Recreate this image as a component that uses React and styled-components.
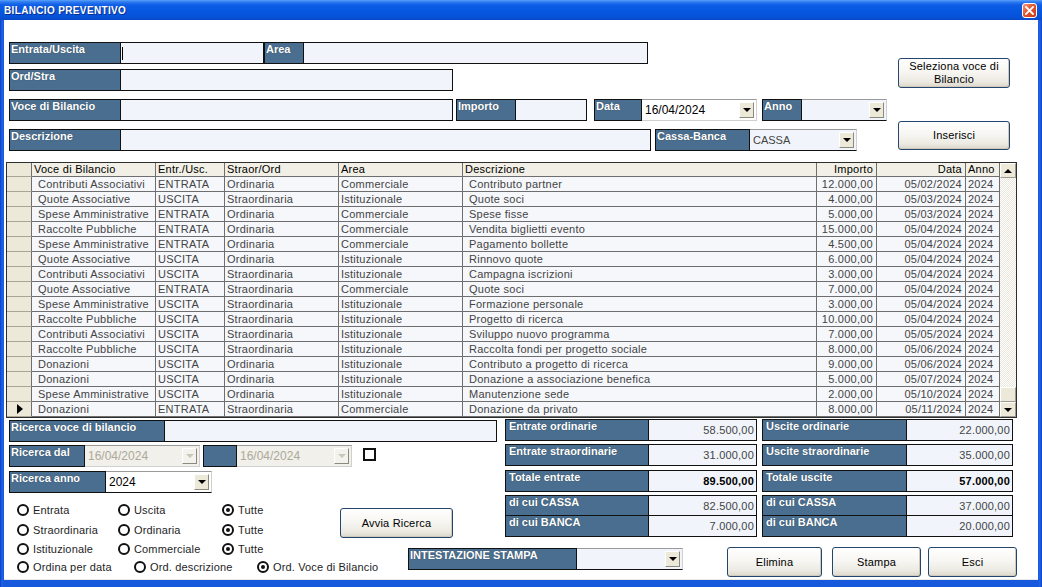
import React from 'react';
import styled, { createGlobalStyle } from 'styled-components';

const LABEL = '#4A6E8F';
const INPUT = '#F1F4FA';
const LINE = '#111';

const GlobalStyle = createGlobalStyle`
  html, body { margin: 0; padding: 0; background: #fff; }
  body { font-family: "Liberation Sans", Arial, sans-serif; }
  * { box-sizing: border-box; }
`;

const Window = styled.div`
  width: 1042px;
  height: 587px;
  display: flex;
  flex-direction: column;
  background: linear-gradient(90deg, #0A3FC4 0px, #1F63E6 2px, #1659DD 4px, #1659DD 1038px, #1F63E6 1040px, #0A3FC4 1042px);
  overflow: hidden;
`;

const TitleBar = styled.div`
  height: 20px;
  flex: none;
  display: flex;
  align-items: center;
  justify-content: space-between;
  padding: 0 5px 0 4px;
  background: linear-gradient(180deg, #5AA2FB 0%, #2E7AF0 10%, #0F5DE6 25%, #0657E0 55%, #0552D8 85%, #0A49C6 100%);
`;

const Title = styled.span`
  color: #fff;
  font-weight: bold;
  font-size: 10px;
  letter-spacing: 0.35px;
  text-shadow: 1px 1px 0 #0A2E8C;
`;

const CloseBtn = styled.div`
  width: 15px;
  height: 15px;
  border: 1px solid #fff;
  border-radius: 3px;
  background: linear-gradient(135deg, #F59C7E 0%, #E2552F 45%, #C83A14 100%);
  display: flex;
  align-items: center;
  justify-content: center;
`;

const Client = styled.div`
  flex: 1;
  margin: 0 4px 8px 4px;
  background: #fff;
  display: flex;
  flex-direction: column;
  padding: 22px 0 0 2px;
  border-bottom: 1px solid #E8E8E8;
`;

/* ---------- top form ---------- */

const TopSection = styled.div`
  display: flex;
  align-items: flex-start;
  margin-left: 3px;
`;

const Form = styled.div`
  display: flex;
  flex-direction: column;
  width: 878px;
`;

const FormRow = styled.div`
  display: flex;
  align-items: flex-start;
  margin-top: ${p => p.$mt || 0}px;
`;

const Field = styled.div`
  display: flex;
  width: ${p => p.$w}px;
  height: 22px;
  border: 1px solid ${LINE};
  margin-left: ${p => p.$ml || 0}px;
  flex: none;
`;

const FieldLabel = styled.div`
  width: ${p => p.$w}px;
  flex: none;
  background: ${LABEL};
  border-right: 1px solid ${LINE};
  color: #fff;
  font-weight: bold;
  font-size: 11px;
  line-height: 13px;
  padding-left: ${p => p.$pl ?? 1}px;
  white-space: nowrap;
  overflow: hidden;
  text-shadow: 0 0 1px rgba(0, 0, 0, 0.45);
`;

const FieldInput = styled.div`
  flex: 1;
  background: ${INPUT};
  display: flex;
  align-items: center;
  padding-left: 1px;
`;

const Caret = styled.span`
  width: 1px;
  height: 13px;
  background: #000;
`;

const LabelBox = styled.div`
  width: ${p => p.$w}px;
  height: 22px;
  flex: none;
  margin-left: ${p => p.$ml || 0}px;
  border: 1px solid ${LINE};
  background: ${LABEL};
  color: #fff;
  font-weight: bold;
  font-size: 11px;
  line-height: 13px;
  padding-left: 1px;
  white-space: nowrap;
  overflow: hidden;
  text-shadow: 0 0 1px rgba(0, 0, 0, 0.45);
`;

const Combo = styled.div`
  width: ${p => p.$w}px;
  height: 22px;
  flex: none;
  display: flex;
  align-items: center;
  background: ${p => p.$bg || '#fff'};
  border-top: 1px solid #9A9A9A;
  border-bottom: 1px solid ${p => p.$bottom || LINE};
  border-right: 1px solid #D0D0D0;
  padding-left: 3px;
`;

const ComboText = styled.span`
  flex: 1;
  font-size: ${p => p.$fs || 12}px;
  color: ${p => p.$color || '#000'};
  white-space: nowrap;
  overflow: hidden;
`;

const DropBtn = styled.div`
  width: 15px;
  height: 16px;
  margin-right: 2px;
  flex: none;
  background: ${p => (p.$disabled ? '#F3F2EC' : '#ECE9D8')};
  border: 1px solid;
  border-color: #fff #8C8A7C #8C8A7C #fff;
  display: flex;
  align-items: center;
  justify-content: center;
  &::after {
    content: '';
    border-left: 4px solid transparent;
    border-right: 4px solid transparent;
    border-top: 4px solid ${p => (p.$disabled ? '#C9C7BA' : '#000')};
  }
`;

const ButtonCol = styled.div`
  display: flex;
  flex-direction: column;
  margin-left: 11px;
  padding-top: 16px;
  gap: 33px;
`;

const XPButton = styled.button`
  width: ${p => p.$w}px;
  height: ${p => p.$h || 30}px;
  margin: ${p => p.$m || '0'};
  flex: none;
  padding: 0;
  border: 1px solid #24466E;
  border-radius: 3px;
  background: linear-gradient(180deg, #FFFFFF 0%, #F7F6F2 45%, #ECEAE2 80%, #DCD7CA 100%);
  box-shadow: inset -1px -1px 0 #CFCABB;
  font-family: "Liberation Sans", Arial, sans-serif;
  font-size: 11px;
  letter-spacing: 0.2px;
  line-height: 13px;
  color: #000;
  text-align: center;
  white-space: pre-line;
`;

/* ---------- data grid ---------- */

const GridBox = styled.div`
  margin-top: 11px;
  width: 1011px;
  height: 256px;
  border: 1px solid #2E2E2E;
  display: flex;
  flex: none;
`;

const Table = styled.div`
  display: grid;
  grid-template-columns: 25px 124px 69px 114px 124px 354px 60px 89px 34px;
  grid-auto-rows: 15px;
  grid-template-rows: 14px;
  align-content: start;
`;

const Cell = styled.div`
  border-right: 1px solid #6E6E6E;
  border-bottom: 1px solid #6E6E6E;
  background: ${p => (p.$head ? '#F2F0E6' : '#F5F7FB')};
  color: ${p => (p.$head ? '#000' : '#444')};
  font-size: 11px;
  letter-spacing: 0.25px;
  line-height: ${p => (p.$head ? 13 : 14)}px;
  padding: 0 ${p => p.$pr ?? 2}px 0 ${p => p.$pl ?? 2}px;
  text-align: ${p => p.$align || 'left'};
  white-space: nowrap;
  overflow: hidden;
`;

const SelCell = styled.div`
  border-right: 1px solid #6E6E6E;
  border-bottom: 1px solid #A8A594;
  background: #ECE9D8;
  display: flex;
  align-items: center;
  justify-content: center;
`;

const Pointer = styled.span`
  border-top: 5px solid transparent;
  border-bottom: 5px solid transparent;
  border-left: 6px solid #000;
  margin-left: 1px;
`;

const ScrollBar = styled.div`
  width: 16px;
  display: flex;
  flex-direction: column;
  background-color: #F5F4EE;
  background-image: repeating-conic-gradient(#FFFFFF 0% 25%, #E9E7DC 0% 50%);
  background-size: 2px 2px;
`;

const ScrollBtn = styled.div`
  height: ${p => p.$h || 15}px;
  margin-top: ${p => (p.$auto ? 'auto' : '0')};
  background: #ECE9D8;
  border: 1px solid;
  border-color: #fff #9D9B8F #9D9B8F #fff;
  display: flex;
  align-items: center;
  justify-content: center;
  &::after {
    content: '';
    display: ${p => (p.$dir ? 'block' : 'none')};
    border-left: 4px solid transparent;
    border-right: 4px solid transparent;
    ${p => (p.$dir === 'up' ? 'border-bottom: 4px solid #000;' : 'border-top: 4px solid #000;')}
  }
`;

/* ---------- bottom ---------- */

const Bottom = styled.div`
  display: grid;
  margin: 1px 0 0 3px;
  grid-template-columns: 391px 100px 517px;
  grid-template-rows: 77px 44px 39px;
  grid-template-areas:
    "search search totals"
    "radiosA radiosA totals"
    "radiosB bar bar";
`;

const Search = styled.div`
  grid-area: search;
  display: flex;
  flex-direction: column;
`;

const Checkbox = styled.div`
  width: 13px;
  height: 13px;
  margin: 3px 0 0 11px;
  border: 2px solid #111;
  background: #fff;
  flex: none;
`;

const Totals = styled.div`
  grid-area: totals;
  display: flex;
  gap: 5px;
  padding-left: 5px;
  align-items: flex-start;
`;

const TotalsCol = styled.div`
  display: flex;
  flex-direction: column;
  width: ${p => p.$w}px;
`;

const TotalRow = styled.div`
  display: flex;
  height: ${p => p.$h || 22}px;
  margin-top: ${p => p.$mt || 0}px;
  border: 1px solid ${LINE};
`;

const TotalValue = styled.div`
  flex: 1;
  background: ${INPUT};
  font-size: 11px;
  letter-spacing: 0.2px;
  font-weight: ${p => (p.$bold ? 'bold' : 'normal')};
  color: ${p => (p.$bold ? '#000' : '#444')};
  text-align: right;
  padding-right: 2px;
  display: flex;
  align-items: center;
  justify-content: flex-end;
`;

const RadiosA = styled.div`
  grid-area: radiosA;
  display: grid;
  grid-template-columns: 331px 113px;
  align-items: start;
`;

const RadiosB = styled.div`
  grid-area: radiosB;
  display: flex;
  flex-direction: column;
`;

const RadioBlock = styled.div`
  display: flex;
  flex-direction: column;
  padding-top: ${p => p.$pt || 0}px;
`;

const RadioRow = styled.div`
  display: grid;
  grid-template-columns: ${p => p.$cols};
  height: 14px;
  padding-left: 8px;
  margin-top: ${p => p.$mt || 0}px;
`;

const RadioItem = styled.div`
  display: flex;
  align-items: center;
  gap: 4px;
  font-size: 11px;
  letter-spacing: 0.15px;
  color: #1E1E1E;
  white-space: nowrap;
`;

const RadioCircle = styled.span`
  width: 12px;
  height: 12px;
  border-radius: 50%;
  border: 2px solid #111;
  background: #fff;
  display: flex;
  align-items: center;
  justify-content: center;
  flex: none;
  &::after {
    content: '';
    display: ${p => (p.$on ? 'block' : 'none')};
    width: 4px;
    height: 4px;
    border-radius: 50%;
    background: #111;
  }
`;

const Bar = styled.div`
  grid-area: bar;
  display: flex;
  align-items: flex-start;
  padding-left: 8px;
`;

const Group = styled.div`
  display: flex;
  margin-top: ${p => p.$mt || 0}px;
  margin-left: ${p => p.$ml || 0}px;
`;

/* ---------- data ---------- */

const rows = [
  ['Contributi Associativi', 'ENTRATA', 'Ordinaria', 'Commerciale', 'Contributo partner', '12.000,00', '05/02/2024'],
  ['Quote Associative', 'USCITA', 'Straordinaria', 'Istituzionale', 'Quote soci', '4.000,00', '05/03/2024'],
  ['Spese Amministrative', 'ENTRATA', 'Ordinaria', 'Commerciale', 'Spese fisse', '5.000,00', '05/03/2024'],
  ['Raccolte Pubbliche', 'ENTRATA', 'Ordinaria', 'Commerciale', 'Vendita biglietti evento', '15.000,00', '05/04/2024'],
  ['Spese Amministrative', 'ENTRATA', 'Ordinaria', 'Commerciale', 'Pagamento bollette', '4.500,00', '05/04/2024'],
  ['Quote Associative', 'USCITA', 'Ordinaria', 'Istituzionale', 'Rinnovo quote', '6.000,00', '05/04/2024'],
  ['Contributi Associativi', 'USCITA', 'Straordinaria', 'Istituzionale', 'Campagna iscrizioni', '3.000,00', '05/04/2024'],
  ['Quote Associative', 'ENTRATA', 'Straordinaria', 'Commerciale', 'Quote soci', '7.000,00', '05/04/2024'],
  ['Spese Amministrative', 'USCITA', 'Straordinaria', 'Istituzionale', 'Formazione personale', '3.000,00', '05/04/2024'],
  ['Raccolte Pubbliche', 'USCITA', 'Straordinaria', 'Istituzionale', 'Progetto di ricerca', '10.000,00', '05/04/2024'],
  ['Contributi Associativi', 'USCITA', 'Straordinaria', 'Istituzionale', 'Sviluppo nuovo programma', '7.000,00', '05/05/2024'],
  ['Raccolte Pubbliche', 'USCITA', 'Straordinaria', 'Istituzionale', 'Raccolta fondi per progetto sociale', '8.000,00', '05/06/2024'],
  ['Donazioni', 'USCITA', 'Ordinaria', 'Istituzionale', 'Contributo a progetto di ricerca', '9.000,00', '05/06/2024'],
  ['Donazioni', 'USCITA', 'Ordinaria', 'Istituzionale', 'Donazione a associazione benefica', '5.000,00', '05/07/2024'],
  ['Spese Amministrative', 'USCITA', 'Ordinaria', 'Istituzionale', 'Manutenzione sede', '2.000,00', '05/10/2024'],
  ['Donazioni', 'ENTRATA', 'Straordinaria', 'Commerciale', 'Donazione da privato', '8.000,00', '05/11/2024'],
];

const Radio = ({ on, children }) => (
  <RadioItem>
    <RadioCircle $on={on} />
    {children}
  </RadioItem>
);

const COLS3 = '101px 104px auto';

export default function App() {
  return (
    <>
      <GlobalStyle />
      <Window>
        <TitleBar>
          <Title>BILANCIO PREVENTIVO</Title>
          <CloseBtn>
            <svg width="9" height="9" viewBox="0 0 9 9">
              <path d="M1 1 L8 8 M8 1 L1 8" stroke="#fff" strokeWidth="1.8" strokeLinecap="square" />
            </svg>
          </CloseBtn>
        </TitleBar>
        <Client>
          <TopSection>
            <Form>
              <FormRow>
                <Field $w={255}>
                  <FieldLabel $w={111}>Entrata/Uscita</FieldLabel>
                  <FieldInput><Caret /></FieldInput>
                </Field>
                <Field $w={384}>
                  <FieldLabel $w={39}>Area</FieldLabel>
                  <FieldInput />
                </Field>
              </FormRow>
              <FormRow $mt={5}>
                <Field $w={444}>
                  <FieldLabel $w={111}>Ord/Stra</FieldLabel>
                  <FieldInput />
                </Field>
              </FormRow>
              <FormRow $mt={8}>
                <Field $w={444}>
                  <FieldLabel $w={111}>Voce di Bilancio</FieldLabel>
                  <FieldInput />
                </Field>
                <Field $w={131} $ml={3}>
                  <FieldLabel $w={59}>Importo</FieldLabel>
                  <FieldInput />
                </Field>
                <LabelBox $w={48} $ml={7}>Data</LabelBox>
                <Combo $w={115} $bottom="#D0D0D0">
                  <ComboText>16/04/2024</ComboText>
                  <DropBtn />
                </Combo>
                <LabelBox $w={40} $ml={5}>Anno</LabelBox>
                <Combo $w={85} $bg={INPUT}>
                  <ComboText />
                  <DropBtn />
                </Combo>
              </FormRow>
              <FormRow $mt={8}>
                <Field $w={642}>
                  <FieldLabel $w={111}>Descrizione</FieldLabel>
                  <FieldInput />
                </Field>
                <LabelBox $w={95} $ml={4}>Cassa-Banca</LabelBox>
                <Combo $w={107} $bg={INPUT}>
                  <ComboText $fs={11} $color="#444">CASSA</ComboText>
                  <DropBtn />
                </Combo>
              </FormRow>
            </Form>
            <ButtonCol>
              <XPButton $w={112} $h={30}>{'Seleziona voce di\nBilancio'}</XPButton>
              <XPButton $w={112} $h={29}>Inserisci</XPButton>
            </ButtonCol>
          </TopSection>

          <GridBox>
            <Table>
              <SelCell />
              <Cell $head>Voce di Bilancio</Cell>
              <Cell $head>Entr./Usc.</Cell>
              <Cell $head>Straor/Ord</Cell>
              <Cell $head>Area</Cell>
              <Cell $head>Descrizione</Cell>
              <Cell $head $align="right" $pr={3}>Importo</Cell>
              <Cell $head $align="right" $pr={3}>Data</Cell>
              <Cell $head>Anno</Cell>
              {rows.map((r, i) => (
                <React.Fragment key={i}>
                  <SelCell>{i === rows.length - 1 && <Pointer />}</SelCell>
                  <Cell $pl={6}>{r[0]}</Cell>
                  <Cell>{r[1]}</Cell>
                  <Cell>{r[2]}</Cell>
                  <Cell>{r[3]}</Cell>
                  <Cell $pl={6}>{r[4]}</Cell>
                  <Cell $align="right" $pr={3}>{r[5]}</Cell>
                  <Cell $align="right" $pr={3}>{r[6]}</Cell>
                  <Cell>2024</Cell>
                </React.Fragment>
              ))}
            </Table>
            <ScrollBar>
              <ScrollBtn $dir="up" />
              <ScrollBtn $auto $h={15} />
              <ScrollBtn $dir="down" />
            </ScrollBar>
          </GridBox>

          <Bottom>
            <Search>
              <FormRow $mt={1}>
                <Field $w={488}>
                  <FieldLabel $w={155}>Ricerca voce di bilancio</FieldLabel>
                  <FieldInput />
                </Field>
              </FormRow>
              <FormRow $mt={3}>
                <LabelBox $w={76}>Ricerca dal</LabelBox>
                <Combo $w={115} $bg="#F1F0EA" $bottom="#D0D0D0">
                  <ComboText $color="#ACA899">16/04/2024</ComboText>
                  <DropBtn $disabled />
                </Combo>
                <LabelBox $w={34} $ml={3} />
                <Combo $w={115} $bg="#F1F0EA" $bottom="#D0D0D0">
                  <ComboText $color="#ACA899">16/04/2024</ComboText>
                  <DropBtn $disabled />
                </Combo>
                <Checkbox />
              </FormRow>
              <FormRow $mt={4}>
                <LabelBox $w={97}>Ricerca anno</LabelBox>
                <Combo $w={106}>
                  <ComboText>2024</ComboText>
                  <DropBtn />
                </Combo>
              </FormRow>
            </Search>

            <Totals>
              <TotalsCol $w={252}>
                <TotalRow>
                  <FieldLabel $w={143} $pl={3}>Entrate ordinarie</FieldLabel>
                  <TotalValue>58.500,00</TotalValue>
                </TotalRow>
                <TotalRow $mt={3}>
                  <FieldLabel $w={143} $pl={3}>Entrate straordinarie</FieldLabel>
                  <TotalValue>31.000,00</TotalValue>
                </TotalRow>
                <TotalRow $mt={4}>
                  <FieldLabel $w={143} $pl={3}>Totale entrate</FieldLabel>
                  <TotalValue $bold>89.500,00</TotalValue>
                </TotalRow>
                <TotalRow $mt={3} $h={21}>
                  <FieldLabel $w={143} $pl={3}>di cui CASSA</FieldLabel>
                  <TotalValue>82.500,00</TotalValue>
                </TotalRow>
                <TotalRow $mt={-1}>
                  <FieldLabel $w={143} $pl={3}>di cui BANCA</FieldLabel>
                  <TotalValue>7.000,00</TotalValue>
                </TotalRow>
              </TotalsCol>
              <TotalsCol $w={251}>
                <TotalRow>
                  <FieldLabel $w={144} $pl={3}>Uscite ordinarie</FieldLabel>
                  <TotalValue>22.000,00</TotalValue>
                </TotalRow>
                <TotalRow $mt={3}>
                  <FieldLabel $w={144} $pl={3}>Uscite straordinarie</FieldLabel>
                  <TotalValue>35.000,00</TotalValue>
                </TotalRow>
                <TotalRow $mt={4}>
                  <FieldLabel $w={144} $pl={3}>Totale uscite</FieldLabel>
                  <TotalValue $bold>57.000,00</TotalValue>
                </TotalRow>
                <TotalRow $mt={3} $h={21}>
                  <FieldLabel $w={144} $pl={3}>di cui CASSA</FieldLabel>
                  <TotalValue>37.000,00</TotalValue>
                </TotalRow>
                <TotalRow $mt={-1}>
                  <FieldLabel $w={144} $pl={3}>di cui BANCA</FieldLabel>
                  <TotalValue>20.000,00</TotalValue>
                </TotalRow>
              </TotalsCol>
            </Totals>

            <RadiosA>
              <RadioBlock $pt={7}>
                <RadioRow $cols={COLS3}>
                  <Radio>Entrata</Radio>
                  <Radio>Uscita</Radio>
                  <Radio on>Tutte</Radio>
                </RadioRow>
                <RadioRow $cols={COLS3} $mt={6}>
                  <Radio>Straordinaria</Radio>
                  <Radio>Ordinaria</Radio>
                  <Radio on>Tutte</Radio>
                </RadioRow>
              </RadioBlock>
              <XPButton $w={113} $h={30} $m="12px 0 0 0">Avvia Ricerca</XPButton>
            </RadiosA>

            <RadiosB>
              <RadioRow $cols={COLS3} $mt={2}>
                <Radio>Istituzionale</Radio>
                <Radio>Commerciale</Radio>
                <Radio on>Tutte</Radio>
              </RadioRow>
              <RadioRow $cols="117px 123px auto" $mt={4}>
                <Radio>Ordina per data</Radio>
                <Radio>Ord. descrizione</Radio>
                <Radio on>Ord. Voce di Bilancio</Radio>
              </RadioRow>
            </RadiosB>

            <Bar>
              <Group $mt={8}>
                <LabelBox $w={169}>INTESTAZIONE STAMPA</LabelBox>
                <Combo $w={106} $bg={INPUT}>
                  <ComboText />
                  <DropBtn />
                </Combo>
              </Group>
              <XPButton $w={95} $h={30} $m="7px 0 0 44px">Elimina</XPButton>
              <XPButton $w={89} $h={30} $m="7px 0 0 10px">Stampa</XPButton>
              <XPButton $w={89} $h={30} $m="7px 0 0 7px">Esci</XPButton>
            </Bar>
          </Bottom>
        </Client>
      </Window>
    </>
  );
}
